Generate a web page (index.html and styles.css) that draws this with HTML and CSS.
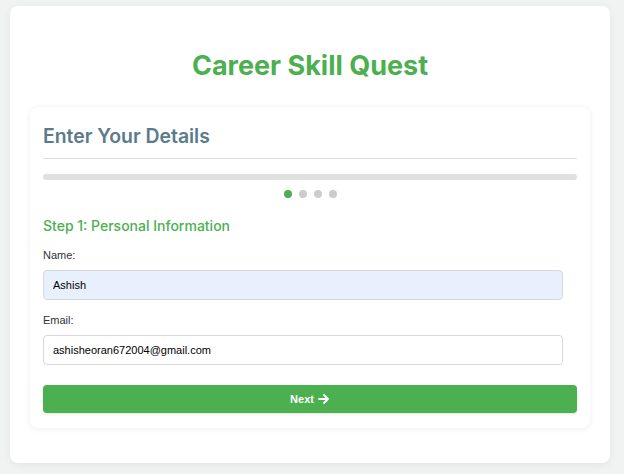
FILE: index.html
```html
<!DOCTYPE html>
<html>
<head>
<meta charset="utf-8">
<link rel="stylesheet" href="styles.css">
</head>
<body>
<div class="app">
  <h1 class="title">Career Skill Quest</h1>
  <div class="card">
    <h2 class="card-title">Enter Your Details</h2>
    <div class="progress"></div>
    <div class="dots">
      <span class="dot active"></span><span class="dot"></span><span class="dot"></span><span class="dot"></span>
    </div>
    <h3 class="step">Step 1: Personal Information</h3>
    <label class="label">Name:</label>
    <input class="input filled" type="text" value="Ashish">
    <label class="label">Email:</label>
    <input class="input" type="email" value="ashisheoran672004@gmail.com">
    <button class="btn">Next <svg class="arrow" width="12" height="10" viewBox="0 0 12 10"><path d="M1 5H10M6 1L10 5L6 9" fill="none" stroke="#fff" stroke-width="1.8" stroke-linecap="round" stroke-linejoin="round"/></svg></button>
  </div>
</div>
</body>
</html>
```
FILE: styles.css
```css
html, body { margin: 0; padding: 0; }
body {
  background: #f1f3f2;
  font-family: "Liberation Sans", Arial, sans-serif;
  width: 624px;
  height: 474px;
  overflow: hidden;
}
.app {
  width: 600px;
  margin: 6px 0 0 10px;
  background: #fff;
  border-radius: 8px;
  box-shadow: 0 2px 10px rgba(0,0,0,0.06);
  padding: 43px 20px 35px;
  box-sizing: border-box;
}
.title {
  margin: 0 0 24px;
  text-align: center;
  font-family: Inter, sans-serif;
  font-weight: 700;
  font-size: 27px;
  line-height: 34px;
  color: #4caf50;
}
.card {
  background: #fff;
  border-radius: 8px;
  box-shadow: 0 1px 6px rgba(0,0,0,0.08);
  padding: 15px 13px 15px;
  display: flex;
  flex-direction: column;
}
.card-title {
  margin: 0;
  font-family: Inter, sans-serif;
  font-weight: 600;
  font-size: 19.4px;
  line-height: 28px;
  color: #5b7b8c;
  padding-bottom: 8px;
  border-bottom: 1px solid #dddddd;
}
.progress {
  margin-top: 15px;
  height: 6px;
  border-radius: 3px;
  background: #e0e0e0;
}
.dots {
  display: flex;
  justify-content: center;
  gap: 7px;
  margin-top: 10px;
}
.dot {
  width: 8px;
  height: 8px;
  border-radius: 50%;
  background: #cccccc;
}
.dot.active { background: #4caf50; }
.step {
  margin: 18px 0 0;
  font-family: Inter, sans-serif;
  font-weight: 500;
  font-size: 14px;
  line-height: 20px;
  color: #4caf50;
}
.label {
  margin-top: 12px;
  font-size: 11px;
  line-height: 14px;
  color: #333;
}
.input {
  margin-top: 8px;
  width: calc(100% - 14px);
  height: 30px;
  box-sizing: border-box;
  border: 1px solid #d8d8d8;
  border-radius: 4px;
  padding: 0 9px;
  font-family: "Liberation Sans", Arial, sans-serif;
  font-size: 11px;
  color: #000;
  background: #fff;
  outline: none;
}
.input.filled { background: #e8f0fe; }
.input + .label { margin-top: 13px; }
.btn {
  margin-top: 20px;
  height: 28px;
  border: none;
  border-radius: 4px;
  background: #4caf50;
  color: #fff;
  font-family: "Liberation Sans", Arial, sans-serif;
  font-weight: 700;
  font-size: 11px;
  display: flex;
  align-items: center;
  justify-content: center;
  gap: 4px;
  box-shadow: 0 1px 3px rgba(0,0,0,0.12);
}
.arrow { display: block; }
```
